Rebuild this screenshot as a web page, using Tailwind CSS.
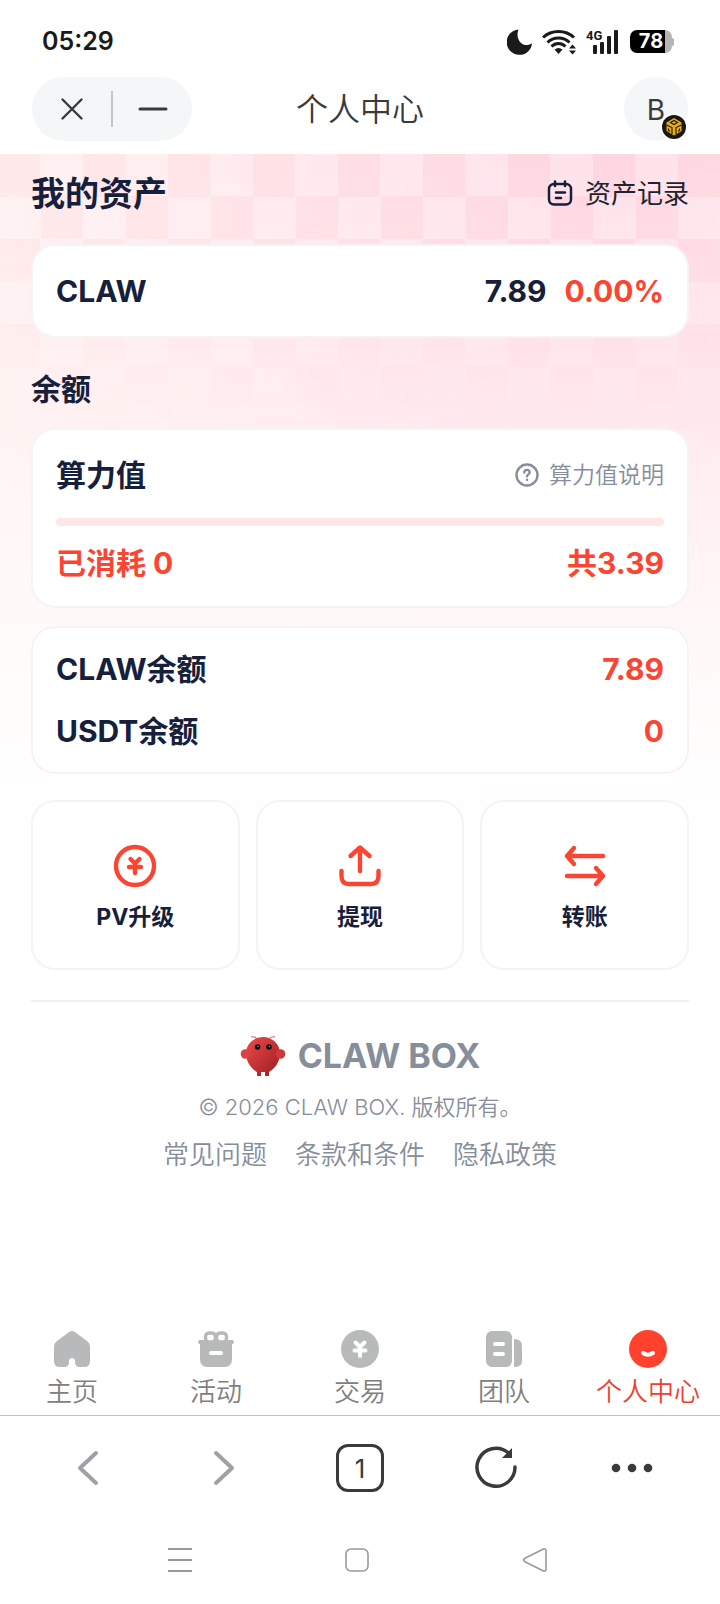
<!DOCTYPE html>
<html lang="zh-CN">
<head>
    <meta charset="UTF-8">
    <meta name="viewport" content="width=device-width, initial-scale=1.0">
    <title>个人中心</title>
    <script src="https://cdn.jsdelivr.net/npm/@tailwindcss/browser@4"></script>
</head>
<body class="min-h-screen flex flex-col bg-white text-[#16203a] font-['Inter','Noto_Sans_CJK_SC',sans-serif]">

<!-- Status bar -->
<div class="h-[77px] pl-[42px] pr-[46px] pt-[6px] flex items-center justify-between text-[#1a1a1a]">
    <span class="text-[25px] font-semibold">05:29</span>
    <div class="flex items-center gap-[10px]">
        <svg class="w-[25px] h-[26px]" viewBox="0 0 25 26" fill="currentColor"><path d="M11.5 0.5A12.7 12.7 0 1 0 25 14.2C22.5 16.3 17.5 17 14.3 14.2C10.5 11 9.5 5 11.5.5Z"/></svg>
        <svg class="w-[34px] h-[26px]" viewBox="0 0 34 26" fill="none" stroke="currentColor" stroke-width="3">
            <path d="M1 8.5C9.5 .5 23.5 .5 32 8.5"/><path d="M5.5 13.5C11.5 7.5 21.5 7.5 27.5 13.5"/><path d="M9.5 17.5C13.5 13.5 19.5 13.5 23.5 17.5"/>
            <path d="M12.5 20.5C15 18.5 18 18.5 20.5 20.5L16.5 25Z" fill="currentColor" stroke="none"/>
            <path d="M27 19.5L30.5 15.5L34 19.5ZM27 21.5H34L30.5 25.5Z" fill="currentColor" stroke="none"/>
        </svg>
        <svg class="w-[34px] h-[26px]" viewBox="0 0 34 26" fill="currentColor">
            <text x="0" y="11" font-size="13" font-weight="700" font-family="Roboto, sans-serif">4G</text>
            <rect x="7" y="16" width="4" height="9" rx="1"/><rect x="14" y="13" width="4" height="12" rx="1"/><rect x="21" y="7" width="4" height="18" rx="1"/><rect x="28" y="1" width="4" height="24" rx="1"/>
        </svg>
        <span class="flex items-center">
            <span class="w-[42px] h-[23px] rounded-[7px] bg-linear-to-r from-black from-84% to-[#b5b5b5] to-84% text-white text-xl leading-[23px] font-bold text-center">78</span>
            <span class="w-[2px] h-2 rounded-r bg-[#b5b5b5]"></span>
        </span>
    </div>
</div>

<!-- App bar -->
<header class="h-[77px] px-8 flex items-start justify-between text-[#3a3a3a]">
    <div class="w-40 h-16 rounded-full bg-[#f4f6f8] flex items-center">
        <button class="flex-1 flex justify-center" aria-label="关闭">
            <svg class="w-6 h-6" viewBox="0 0 24 24" fill="none" stroke="currentColor" stroke-width="2.4" stroke-linecap="round"><path d="M2.5 2.5L21.5 21.5M21.5 2.5L2.5 21.5"/></svg>
        </button>
        <span class="w-[2px] h-9 bg-[#c4c6c8]"></span>
        <button class="flex-1 flex justify-center" aria-label="最小化">
            <svg class="w-8 h-6" viewBox="0 0 32 24" fill="none" stroke="currentColor" stroke-width="3" stroke-linecap="round"><path d="M3 12H29"/></svg>
        </button>
    </div>
    <h1 class="pr-24 text-[32px] leading-[66px] font-[350]">个人中心</h1>
    <button class="relative w-16 h-16 rounded-full bg-[#f4f6f8] text-[28px] leading-[66px]" aria-label="钱包">B
        <svg class="absolute right-0 bottom-0 w-7 h-7" viewBox="0 0 28 28">
            <circle cx="14" cy="14" r="14" fill="#fff"/><circle cx="14" cy="14" r="12" fill="#1a1815"/>
            <path d="M14 5L21.5 9.5V18L14 22.5L6.5 18V9.5Z" fill="#e8ac10"/>
            <path d="M10.5 9.5L14 7.5L17.5 9.5L14 11.5ZM6.5 12L12 14.5V21M21.5 12L16 14.5V21M8.5 15.5V17.5L10 18.3M19.5 15.5V17.5L18 18.3" fill="none" stroke="#1a1815" stroke-width="1.1"/>
        </svg>
    </button>
</header>

<main class="relative px-[31px] pt-4 pb-10">
    <!-- Pink backdrop with a checkerboard that fades out -->
    <div class="absolute inset-x-0 top-0 h-[700px] bg-[radial-gradient(circle_at_85%_0,#ffd9e5,#ffe8ec_45%,#fff2f0_80%)] [mask-image:linear-gradient(#000,#000000d0_35%,#00000050_70%,transparent)]" aria-hidden="true"></div>
    <div class="absolute inset-x-0 top-0 h-72 bg-[conic-gradient(#ffffff38_25%,#fa786e08_0_50%,#ffffff38_0_75%,#fa786e08_0)] bg-[length:85px_85px] bg-[position:-2px_0px] [mask-image:linear-gradient(#000_30%,transparent)]" aria-hidden="true"></div>

    <div class="relative">
        <div class="h-[46px] flex items-center justify-between">
            <h2 class="text-[34px] font-bold">我的资产</h2>
            <a class="flex items-center gap-3 text-[26px] text-[#20242e]" href="#records">
                <svg class="w-[26px] h-[26px]" viewBox="0 0 26 26" fill="none" stroke="#16203a" stroke-width="2.5" stroke-linecap="round"><rect x="2" y="4" width="22" height="20.5" rx="5"/><path d="M8 1.5V6M18 1.5V6M9 12.5H18M9 18H14"/></svg>
                资产记录
            </a>
        </div>

        <div class="mt-7 h-[94px] px-[23px] flex items-center rounded-3xl border-2 border-[#f5f4f5] bg-white text-[30px] font-bold">
            <span class="flex-1">CLAW</span>
            <span>7.89</span>
            <span class="ml-[18px] text-[#fa4532]">0.00%</span>
        </div>

        <h2 class="mt-[30px] mb-[18px] text-[30px] leading-[42px] font-bold">余额</h2>

        <section class="px-[23px] pt-6 pb-[22px] rounded-3xl border-2 border-[#f5f4f5] bg-white text-[30px] leading-[42px] font-bold">
            <div class="flex items-center justify-between">
                <h3>算力值</h3>
                <a class="flex items-center gap-[10px] text-[23px] font-[350] text-[#868d9b]" href="#power">
                    <svg class="w-6 h-6" viewBox="0 0 24 24" fill="none" stroke="currentColor" stroke-width="2.4" stroke-linecap="round"><circle cx="12" cy="12" r="10.5"/><path d="M9.3 9.5C9.3 6 14.7 6 14.7 9.3C14.7 11.3 12 11.5 12 13.3"/><path d="M12 16.8V16.9"/></svg>
                    算力值说明
                </a>
            </div>
            <div class="mt-[22px] mb-4 h-2 rounded bg-[#fde8e7]" role="progressbar" aria-label="算力值" aria-valuenow="0" aria-valuemin="0" aria-valuemax="3.39"></div>
            <div class="flex justify-between text-[#fa4532]"><span>已消耗 0</span><span>共3.39</span></div>
        </section>

        <section class="mt-[18px] px-[23px] py-5 flex flex-col gap-5 rounded-3xl border-2 border-[#f5f4f5] bg-white text-[30px] leading-[42px] font-bold">
            <div class="flex justify-between"><span>CLAW余额</span><span class="text-[#fa4532]">7.89</span></div>
            <div class="flex justify-between"><span>USDT余额</span><span class="text-[#fa4532]">0</span></div>
        </section>

        <div class="mt-[26px] grid grid-cols-3 gap-4 text-[23px] leading-[34px] font-bold">
            <button class="h-[170px] pt-2 flex flex-col items-center justify-center gap-3 rounded-3xl border-2 border-[#f5f4f5] bg-white">
                <svg class="w-11 h-11 text-[#fa4532]" viewBox="0 0 44 44" fill="none" stroke="currentColor" stroke-width="4.4" stroke-linecap="round" stroke-linejoin="round"><circle cx="22" cy="22" r="19"/><path d="M17.5 15L22 19.5L26.5 15M16 23H28M22 20V29"/></svg>
                PV升级
            </button>
            <button class="h-[170px] pt-2 flex flex-col items-center justify-center gap-3 rounded-3xl border-2 border-[#f5f4f5] bg-white">
                <svg class="w-11 h-11 text-[#fa4532]" viewBox="0 0 44 44" fill="none" stroke="currentColor" stroke-width="4.4" stroke-linecap="round" stroke-linejoin="round"><path d="M22 27V4M12.5 12L22 3.5L31.5 12M3.5 27V32C3.5 37.5 6 40 11 40H33C38 40 40.5 37.5 40.5 32V27"/></svg>
                提现
            </button>
            <button class="h-[170px] pt-2 flex flex-col items-center justify-center gap-3 rounded-3xl border-2 border-[#f5f4f5] bg-white">
                <svg class="w-11 h-11 text-[#fa4532]" viewBox="0 0 44 44" fill="none" stroke="currentColor" stroke-width="4.4" stroke-linecap="round" stroke-linejoin="round"><path d="M40 12H4M11 4L4 12L11 20M4 32H40M33 24L40 32L33 40"/></svg>
                转账
            </button>
        </div>

        <footer class="mt-[30px] pt-8 border-t-2 border-[#f0f0f0] flex flex-col items-center text-[#868d9b]">
            <div class="flex items-center gap-3 text-[34px] leading-[44px] font-bold">
                <svg class="w-[46px] h-[42px]" viewBox="0 0 46 42">
                    <defs><linearGradient id="claw" x1="0" y1="0" x2="1" y2="1"><stop offset="0" stop-color="#ee4a4a"/><stop offset="1" stop-color="#9c1c22"/></linearGradient></defs>
                    <path d="M17 4Q15 1 11 2M29 4Q31 1 35 2" fill="none" stroke="#e06060" stroke-width="1.2"/>
                    <path d="M23 2C33 2 40 10 40 18C40 28 34 34 29 37V41H25V37H21V41H17V37C12 34 6 28 6 18C6 10 13 2 23 2Z" fill="url(#claw)"/>
                    <circle cx="5.5" cy="19" r="4.8" fill="#dc4244"/><circle cx="40.5" cy="19" r="4.8" fill="#cf383b"/>
                    <circle cx="17.5" cy="12" r="2.8" fill="#111"/><circle cx="29" cy="12" r="2.8" fill="#111"/><circle cx="18" cy="11.5" r=".8" fill="#3bb"/><circle cx="29.5" cy="11.5" r=".8" fill="#3bb"/>
                </svg>
                CLAW BOX
            </div>
            <p class="mt-3 text-[22px] leading-[34px] font-[350]">© 2026 CLAW BOX. 版权所有。</p>
            <nav class="mt-[10px] flex gap-7 text-[26px] leading-[42px] font-[350]">
                <a href="#faq">常见问题</a>
                <a href="#terms">条款和条件</a>
                <a href="#privacy">隐私政策</a>
            </nav>
        </footer>
    </div>
</main>

<!-- Tab bar -->
<nav class="mt-auto pb-[3px] grid grid-cols-5 border-b border-[#bfbfbf] text-[26px] leading-10 font-[350] text-[#808080]">
    <a class="flex flex-col items-center gap-[3px]" href="#home">
        <svg class="w-10 h-10" viewBox="0 0 40 40"><path d="M17 3Q20 1 23 3L35 12Q38 14 38 18V32Q38 38 32 38H28Q23 38 23 33V32Q23 29 20 29T17 32V33Q17 38 12 38H8Q2 38 2 32V18Q2 14 5 12Z" fill="#b7b9bb"/></svg>
        主页
    </a>
    <a class="flex flex-col items-center gap-[3px]" href="#events">
        <svg class="w-10 h-10" viewBox="0 0 40 40"><path d="M4 12H36V30Q36 38 28 38H12Q4 38 4 30Z" fill="#b7b9bb"/><path d="M4 13H36" stroke="#b7b9bb" stroke-width="4" stroke-linecap="round"/><rect x="9.5" y="4" width="10" height="9" rx="3.5" fill="#fff" stroke="#b7b9bb" stroke-width="3.5"/><rect x="20.5" y="4" width="10" height="9" rx="3.5" fill="#fff" stroke="#b7b9bb" stroke-width="3.5"/><path d="M15 24H25" stroke="#fff" stroke-width="4" stroke-linecap="round"/></svg>
        活动
    </a>
    <a class="flex flex-col items-center gap-[3px]" href="#trade">
        <svg class="w-10 h-10" viewBox="0 0 40 40" fill="none" stroke="#fff" stroke-width="4" stroke-linecap="round" stroke-linejoin="round"><circle cx="20" cy="20" r="19" fill="#b7b9bb" stroke="none"/><path d="M15.5 13.5L20 18L24.5 13.5M14.5 21.5H25.5M20 19V27"/></svg>
        交易
    </a>
    <a class="flex flex-col items-center gap-[3px]" href="#team">
        <svg class="w-10 h-10" viewBox="0 0 40 40"><rect x="2" y="2" width="26" height="36" rx="6" fill="#b7b9bb"/><path d="M30 10Q38 10 38 17V32Q38 38 30 38Z" fill="#b7b9bb"/><path d="M11 15H19M11 25H19" stroke="#fff" stroke-width="4" stroke-linecap="round"/></svg>
        团队
    </a>
    <a class="flex flex-col items-center gap-[3px] text-[#ee4030]" href="#me">
        <svg class="w-10 h-10" viewBox="0 0 40 40"><circle cx="20" cy="20" r="19" fill="#ff422e"/><path d="M15 24Q20 27.5 25 24" fill="none" stroke="#fff" stroke-width="4" stroke-linecap="round"/></svg>
        个人中心
    </a>
</nav>

<!-- Browser toolbar -->
<div class="h-[104px] px-5 grid grid-cols-5 items-center justify-items-center text-[#3a3a3c]">
    <button class="text-[#a0a0a6]" aria-label="后退"><svg class="w-10 h-10" viewBox="0 0 40 40" fill="none" stroke="currentColor" stroke-width="4" stroke-linecap="round" stroke-linejoin="round"><path d="M28 5L12 20L28 35"/></svg></button>
    <button class="text-[#a0a0a6]" aria-label="前进"><svg class="w-10 h-10" viewBox="0 0 40 40" fill="none" stroke="currentColor" stroke-width="4" stroke-linecap="round" stroke-linejoin="round"><path d="M12 5L28 20L12 35"/></svg></button>
    <button class="w-12 h-12 rounded-xl border-3 border-current text-[26px]">1</button>
    <button aria-label="刷新"><svg class="w-11 h-11" viewBox="0 0 44 44" fill="none" stroke="currentColor" stroke-width="3.5" stroke-linecap="round"><path d="M41 21A19 19 0 1 1 34 6.5"/><path d="M38 2V12H28Z" fill="currentColor" stroke="none"/></svg></button>
    <button aria-label="更多"><svg class="w-11 h-11" viewBox="0 0 44 44" fill="currentColor"><circle cx="6" cy="22" r="4.3"/><circle cx="22" cy="22" r="4.3"/><circle cx="38" cy="22" r="4.3"/></svg></button>
</div>

<!-- System navigation -->
<div class="h-[84px] pl-[91px] pr-24 pb-1 grid grid-cols-3 items-center justify-items-center text-[#999]">
    <button aria-label="最近任务"><svg class="w-7 h-7" viewBox="0 0 28 28" stroke="currentColor" stroke-width="2"><path d="M2 3H26M2 14H26M2 25H26"/></svg></button>
    <button aria-label="主屏幕"><svg class="w-7 h-7" viewBox="0 0 28 28" fill="none" stroke="currentColor" stroke-width="1.6"><rect x="3" y="3" width="22" height="22" rx="5"/></svg></button>
    <button aria-label="返回"><svg class="w-7 h-7" viewBox="0 0 28 28" fill="none" stroke="currentColor" stroke-width="1.6" stroke-linejoin="round"><path d="M3.5 12.5L22.5 3Q25 2.5 25 5V23Q25 25.5 22.5 25L3.5 15.5Q1.5 14 3.5 12.5Z"/></svg></button>
</div>

</body>
</html>
